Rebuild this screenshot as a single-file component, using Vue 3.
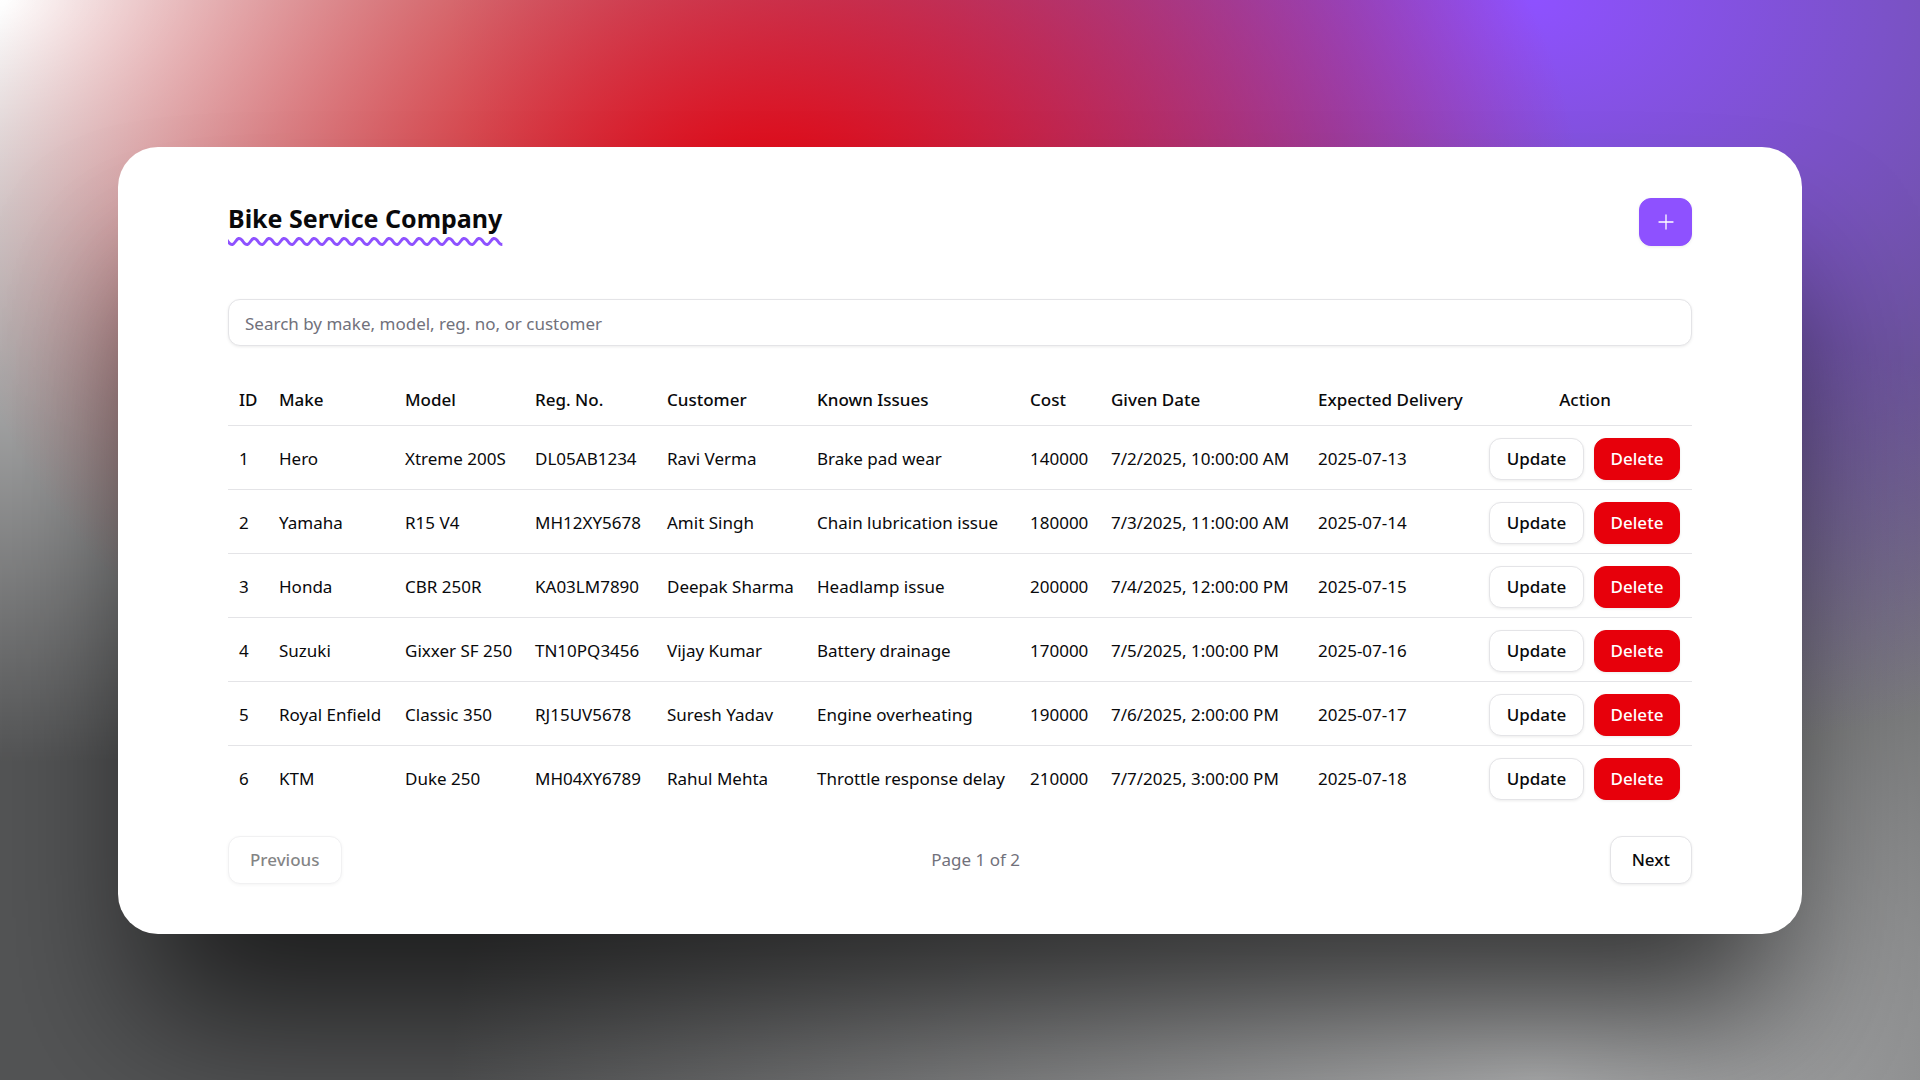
<script setup>
import { ref } from 'vue'

const query = ref('')
const columns = [
  { label: 'ID', key: 'id' },
  { label: 'Make', key: 'make' },
  { label: 'Model', key: 'model' },
  { label: 'Reg. No.', key: 'reg' },
  { label: 'Customer', key: 'customer' },
  { label: 'Known Issues', key: 'issue' },
  { label: 'Cost', key: 'cost' },
  { label: 'Given Date', key: 'given' },
  { label: 'Expected Delivery', key: 'due' },
]
const bikes = [
  { id: 1, make: 'Hero', model: 'Xtreme 200S', reg: 'DL05AB1234', customer: 'Ravi Verma', issue: 'Brake pad wear', cost: 140000, given: '7/2/2025, 10:00:00 AM', due: '2025-07-13' },
  { id: 2, make: 'Yamaha', model: 'R15 V4', reg: 'MH12XY5678', customer: 'Amit Singh', issue: 'Chain lubrication issue', cost: 180000, given: '7/3/2025, 11:00:00 AM', due: '2025-07-14' },
  { id: 3, make: 'Honda', model: 'CBR 250R', reg: 'KA03LM7890', customer: 'Deepak Sharma', issue: 'Headlamp issue', cost: 200000, given: '7/4/2025, 12:00:00 PM', due: '2025-07-15' },
  { id: 4, make: 'Suzuki', model: 'Gixxer SF 250', reg: 'TN10PQ3456', customer: 'Vijay Kumar', issue: 'Battery drainage', cost: 170000, given: '7/5/2025, 1:00:00 PM', due: '2025-07-16' },
  { id: 5, make: 'Royal Enfield', model: 'Classic 350', reg: 'RJ15UV5678', customer: 'Suresh Yadav', issue: 'Engine overheating', cost: 190000, given: '7/6/2025, 2:00:00 PM', due: '2025-07-17' },
  { id: 6, make: 'KTM', model: 'Duke 250', reg: 'MH04XY6789', customer: 'Rahul Mehta', issue: 'Throttle response delay', cost: 210000, given: '7/7/2025, 3:00:00 PM', due: '2025-07-18' },
]
</script>

<template>
  <div class="page">
    <main class="card">
      <header class="top">
        <h1>Bike Service Company</h1>
        <button class="btn add" type="button" aria-label="Add bike">
          <svg viewBox="0 0 20 20" width="20" height="20" fill="none" stroke="currentColor" stroke-width="1.3" stroke-linecap="round" aria-hidden="true">
            <path d="M3 10h14M10 3v14" />
          </svg>
        </button>
      </header>

      <input v-model="query" class="search" type="text" aria-label="Search bikes" placeholder="Search by make, model, reg. no, or customer" />

      <table>
        <colgroup>
          <col v-for="c in columns" :key="c.key" :class="'col-' + c.key" />
          <col class="col-action" />
        </colgroup>
        <thead>
          <tr>
            <th v-for="c in columns" :key="c.key" scope="col">{{ c.label }}</th>
            <th class="action" scope="col">Action</th>
          </tr>
        </thead>
        <tbody>
          <tr v-for="bike in bikes" :key="bike.id">
            <td v-for="c in columns" :key="c.key">{{ bike[c.key] }}</td>
            <td>
              <div class="actions">
                <button class="btn small" type="button">Update</button>
                <button class="btn small danger" type="button">Delete</button>
              </div>
            </td>
          </tr>
        </tbody>
      </table>

      <nav class="pager" aria-label="Pagination">
        <button class="btn" type="button" disabled>Previous</button>
        <span>Page 1 of 2</span>
        <button class="btn" type="button">Next</button>
      </nav>
    </main>
  </div>
</template>

<style>
body {
  margin: 0;
}
</style>

<style scoped>
.page {
  min-height: 100vh;
  box-sizing: border-box;
  display: flex;
  align-items: center;
  justify-content: center;
  overflow: hidden;
  padding: 48px 118px;
  font-family: "Segoe UI", "Noto Sans", sans-serif;
  font-size: 17px;
  line-height: 24px;
  color: #09090b;
  background-color: #535455;
  background-image:
    radial-gradient(at 40% 20%, #e7000b 0, transparent 50%),
    radial-gradient(at 80% 0%, #8e51ff 0, transparent 50%),
    radial-gradient(at 80% 100%, #b2b3b4 0, transparent 50%),
    radial-gradient(at 0% 0%, #ffffff 0, transparent 50%);
}
.card {
  flex: 1;
  box-sizing: border-box;
  padding: 51px 110px 50px;
  border-radius: 40px;
  background: #ffffff;
  box-shadow: 0 108px 144px -28px rgba(0, 0, 0, 0.66);
}
.top {
  display: flex;
  align-items: flex-start;
  justify-content: space-between;
  margin-bottom: 53px;
}
h1 {
  margin: 0;
  font-size: 25px;
  line-height: 40px;
  font-weight: 700;
  text-decoration: underline wavy #8e51ff 3px;
  text-underline-offset: 9px;
}
.btn {
  box-sizing: border-box;
  height: 48px;
  padding: 1px 21px 0;
  border: 1px solid #e4e4e7;
  border-radius: 12px;
  background: #ffffff;
  color: #09090b;
  font: inherit;
  font-weight: 500;
  box-shadow: 0 1px 3px rgba(0, 0, 0, 0.08);
}
.btn:disabled {
  opacity: 0.5;
}
.add {
  display: flex;
  align-items: center;
  justify-content: center;
  width: 53px;
  padding: 0;
  border-color: #8e51ff;
  background: #8e51ff;
  color: #ffffff;
}
.search {
  display: block;
  box-sizing: border-box;
  width: 100%;
  height: 47px;
  margin-bottom: 29px;
  padding: 2px 16px 0;
  border: 1px solid #e4e4e7;
  border-radius: 12px;
  font: inherit;
  color: inherit;
  background: #ffffff;
  box-shadow: 0 1px 3px rgba(0, 0, 0, 0.08);
}
.search::placeholder {
  color: #71717b;
  opacity: 1;
}
table {
  width: 100%;
  table-layout: fixed;
  border-collapse: collapse;
  white-space: nowrap;
}
th,
td {
  height: 64px;
  box-sizing: border-box;
  padding: 2px 11px 0;
  text-align: left;
}
th {
  height: 51px;
  padding-top: 0;
  font-weight: 500;
}
tr {
  border-bottom: 1px solid #e4e4e7;
}
tbody tr:last-child {
  border-bottom: 0;
}
.action {
  text-align: center;
}
.col-id { width: 40px; }
.col-make { width: 126px; }
.col-model { width: 130px; }
.col-reg { width: 132px; }
.col-customer { width: 150px; }
.col-issue { width: 213px; }
.col-cost { width: 81px; }
.col-given { width: 207px; }
.col-due { width: 171px; }
.actions {
  display: flex;
  gap: 10px;
}
.small {
  height: 42px;
  flex: 0 0 95px;
  padding: 0;
}
.danger {
  flex-basis: 86px;
  border-color: #e7000b;
  background: #e7000b;
  color: #ffffff;
}
.pager {
  display: flex;
  align-items: center;
  justify-content: space-between;
  margin-top: 26px;
}
.pager span {
  color: #71717b;
}
</style>
